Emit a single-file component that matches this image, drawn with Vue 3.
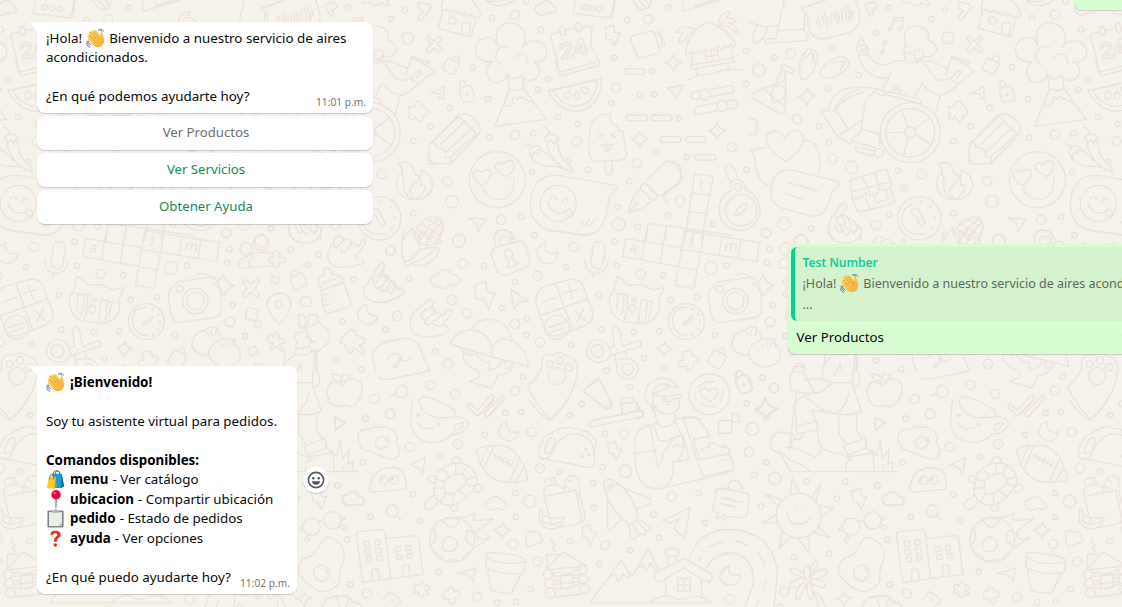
<script setup>
const dotsA = {
  8: [[74,31],[34,57],[336,54],[438,4],[482,89],[277,202],[209,323],[324,297],[152,379],[100,423],[327,413],[504,237],[474,270],[534,351],[593,372],[460,400],[456,516],[424,650],[623,509],[713,621],[826,456],[748,544],[865,647],[922,472],[703,174],[694,309],[741,60],[866,23],[779,283],[822,283],[897,354],[816,214],[1097,153],[1099,251],[1099,510],[999,673],[773,680],[100,640],[463,706]],
  14: [[405,44],[405,404],[202,543],[590,424],[708,263],[805,58],[770,490],[900,603],[1055,441],[363,659],[5,522]],
  19: [[216,605],[716,673],[237,722]]
}
const dotsB = {
  8: [[416,23],[379,98],[246,146],[74,174],[326,225],[236,265],[207,378],[236,428],[444,511],[462,563],[416,643],[184,685]],
  14: [[122,161],[141,357],[248,477],[49,699],[377,675]],
  19: [[27,210],[305,502],[102,671],[153,722]]
}
const dotsC = {
  8: [[86,145],[16,299],[166,365],[312,108],[405,156],[365,234],[442,265],[438,315],[428,440],[377,549],[423,546],[574,344],[558,112],[657,195],[703,35],[710,107],[850,136],[872,209],[951,201],[1041,107],[1168,57],[1162,98],[664,299],[761,307],[838,304],[793,384],[680,422],[751,471],[605,521],[570,556],[850,414],[1005,315],[1178,225],[1215,318],[1147,443],[1100,520],[463,16]],
  14: [[31,62],[248,101],[215,210],[262,250],[52,257],[204,401],[152,465],[225,492],[405,282],[480,337],[473,138],[581,51],[405,482],[782,132],[1158,10],[1170,276],[1182,474],[30,552]],
  19: [[237,32],[994,114]]
}
const dotsD = {
  8: [[107,56],[99,186],[23,257],[122,351],[52,419],[60,553],[249,282],[329,170],[271,363],[326,515],[464,104],[527,39],[573,36],[720,46],[756,12],[556,279],[557,351],[689,215],[818,202],[824,102],[789,249],[792,323],[719,423],[809,492],[602,567],[501,607],[557,606],[971,343],[987,413],[900,450],[1106,279],[1124,368]],
  14: [[181,41],[239,141],[384,132],[605,96],[630,205],[882,100],[549,432],[622,484],[825,436],[1025,290],[111,580],[441,590]],
  19: [[599,304],[886,214]]
}
const dotsE = {
  8: [[462,31],[538,58],[551,206],[121,83],[75,160],[132,336],[97,374],[117,469],[254,394],[370,395],[345,446],[466,407],[567,500],[496,569],[321,611],[215,622],[504,704],[173,770]],
  14: [[156,114],[578,147],[81,305],[187,724],[22,748]],
  19: [[91,237],[158,385]]
}
const dotsF = {
  8: [[812,25],[872,88],[956,103],[924,135],[1062,178],[1027,305],[736,348],[1156,329],[1009,421],[697,255]],
  14: [[1172,92],[690,305]],
  19: []
}
const groups = [
  ['translate(380 0) scale(.33333)', dotsA],
  ['translate(750 0) scale(.33333)', dotsB],
  ['translate(380 230) scale(.33333)', dotsC],
  ['translate(330 400) scale(.33333)', dotsD],
  ['translate(722 350) scale(.33333)', dotsE],
  ['translate(0 220) translate(540 0) scale(.33333)', dotsF]
]
const replies = [
  { text: 'Ver Productos', used: true },
  { text: 'Ver Servicios', used: false },
  { text: 'Obtener Ayuda', used: false }
]
</script>

<template>
  <main class="chat">
    <svg class="wallpaper" width="1122" height="607" viewBox="0 0 1122 607" aria-hidden="true">
      <defs>
        <g id="doodles">
          <g v-for="(g, i) in groups" :key="i" :transform="g[0]">
            <template v-for="(list, r) in g[1]" :key="r">
              <circle v-for="(c, j) in list" :key="j" :cx="c[0]" :cy="c[1]" :r="r" />
            </template>
          </g>

          <g transform="translate(380 0) scale(.33333)">
            <path d="M73 97L94 97L102 114L93 131L73 131L65 114Z" />
            <path d="M116 22Q108 10 121 6L137 12Q150 7 154 23L125 60Q116 63 113 53L130 32Q120 32 116 22Z" />
            <path d="M142 117Q137 110 145 107L163 124L180 107Q189 110 186 117L171 132L188 149Q186 158 178 157L163 143L147 158Q137 155 139 147L154 132Z" />
            <path d="M189 0Q184 10 184 24Q192 37 201 27Q209 42 219 31Q226 46 236 35Q244 51 254 39Q262 55 272 43Q280 59 289 47Q297 60 301 48Q304 29 275 0M187 30L176 85L273 112L287 58M243 103L246 76Q251 62 267 68Q274 72 271 84L265 110" /><circle cx="217" cy="62" r="11" />
            <path d="M318 1Q352 33 400 2M318 0Q350 10 374 0" />
            <path d="M353 137Q345 103 354 87Q370 65 393 69Q430 72 436 108Q437 126 428 142Q438 121 468 123Q502 128 500 160Q495 188 459 187Q480 194 479 216Q474 242 445 242Q430 239 424 226Q410 239 401 236Q388 233 381 220Q377 245 348 248Q318 243 320 211Q323 191 338 185Q289 188 286 151Q289 112 330 113Q347 120 353 137M387 141Q361 134 350 156Q341 181 365 194M402 174Q414 157 429 163Q445 170 443 192" />
            <path d="M381 220L389 267L344 379L499 358L432 267L428 232M389 267Q410 275 432 267M374 306Q374 320 392 318Q401 311 397 297Q402 286 409 296Q413 303 417 288Q422 294 428 293Q443 304 460 307" />
            <path d="M463 28Q465 15 479 16Q485 1 501 2Q516 5 516 15Q528 16 529 28Q527 42 512 39Q501 36 493 44Q477 49 473 39Q464 38 463 28Z" />
            <path d="M586 0L579 40L690 54L700 20L702 0M690 54Q700 53 700 43L705 0" /><circle cx="614" cy="22" r="8" /><circle cx="637" cy="25" r="8" /><circle cx="659" cy="28" r="8" />
            <path d="M538 96L519 101Q511 104 513 114L530 176L527 193L539 220Q541 228 549 226L653 198Q662 193 658 182L632 140L636 85Q633 77 622 79L607 83M556 92L585 85M530 176L535 209Q538 216 546 215L655 185" /><rect x="540" y="79" width="15" height="28" rx="8" transform="rotate(-12 548 93)" /><rect x="588" y="69" width="15" height="28" rx="8" transform="rotate(-12 595 83)" />
            <text class="date" x="544" y="179" font-size="66" transform="rotate(-12 544 179)">24</text>
            <path d="M505 272L664 235Q665 295 626 323Q585 345 548 322Q514 298 505 272ZM519 270L651 240Q653 284 617 311Q580 328 551 307Q529 294 519 270M566 273Q547 283 557 295Q571 301 573 285Q572 277 566 273M589 276Q577 288 587 298Q601 298 601 286Q598 278 589 276M603 264Q605 281 621 280Q632 269 617 262Q611 260 603 264" />
            <path d="M675 83L702 76L704 98L720 98L703 139L697 119L679 118Z" />
            <path d="M762 106L809 94Q821 92 825 103L839 148Q840 158 831 161L784 173Q772 173 768 162L752 122Q752 109 762 106ZM826 107L837 92L855 131Q857 138 848 140L834 136M837 94L847 131" />
            <path d="M759 0Q769 22 783 30L803 25Q812 21 812 0M776 0L798 25M796 0L807 18M907 0L909 34L1018 0M945 9Q948 18 953 14L1000 0" />
            <path d="M880 165Q887 183 904 188Q887 193 881 213Q873 194 856 188Q874 184 880 165Z" />
            <path d="M917 161Q919 112 963 77Q988 57 1009 78Q1045 91 1067 132Q1063 147 1052 133Q1045 151 1034 136Q1026 155 1015 140Q1007 159 996 143Q988 161 978 147Q968 167 957 150Q945 169 936 153Q929 165 917 161M934 158L938 192M1052 142L1059 174M932 195L1062 174L1064 185L935 207ZM947 207L952 224M1043 189L1046 207M975 151L980 185M1012 145L1017 178M993 150L997 183M977 170L1015 164M926 240Q940 236 951 224Q983 227 1010 218Q1040 203 1087 211" />
            <path d="M945 88Q907 70 885 97Q898 96 910 97Q894 112 899 128Q912 125 920 109Q930 98 945 94M1017 78Q1012 39 1050 35Q1046 46 1037 54Q1060 52 1070 66Q1058 69 1046 67Q1068 79 1077 97Q1064 97 1050 83Q1035 74 1017 78L1032 61" />
            <path d="M859 264Q877 263 908 255Q900 284 884 299L881 277Z" />
            <path d="M931 285Q933 278 942 276L960 273M990 268L1052 257Q1061 258 1062 269Q1062 276 1053 279L991 290M958 295L940 298Q931 295 931 285M942 329Q943 321 951 319L1012 309M1042 303L1064 300Q1075 306 1073 317Q1070 323 1064 324L1043 328M1010 333L950 343Q942 339 942 329" /><circle cx="975" cy="284" r="16" /><circle cx="1027" cy="317" r="17" />
            <rect x="733" y="206" width="61" height="17" rx="8" /><rect x="738" y="345" width="64" height="17" rx="8" /><rect x="814" y="345" width="62" height="17" rx="8" /><rect x="841" y="410" width="62" height="17" rx="8" /><rect x="917" y="410" width="62" height="17" rx="8" /><rect x="944" y="464" width="62" height="17" rx="8" />
            <path d="M775 393Q786 410 805 416Q789 421 783 442Q775 425 755 420Q773 415 775 393M1009 368Q1016 386 1038 391Q1020 397 1012 416Q1005 399 987 393Q1004 388 1009 368" />
            <path d="M152 280Q174 272 192 259L192 298L177 293L182 281ZM204 174L232 188Q240 193 236 200L221 221Q214 226 207 220L189 207Q185 202 190 197ZM218 178Q225 161 235 170Q240 175 235 186M241 265L266 256Q274 256 277 266L284 296Q282 302 275 304L255 307Q249 306 246 299L238 274ZM242 263Q236 246 246 240Q254 240 257 257" /><circle cx="261" cy="283" r="3" />
            <path d="M87 320L103 321Q107 302 119 304L143 331Q142 349 134 346Q126 348 128 358L119 366L104 350Q92 370 86 349Q96 341 87 338Z" />
            <path d="M145 492L149 434L235 344Q268 330 298 375Q303 391 297 402L213 490ZM149 434Q151 422 160 428Q169 432 169 443Q189 439 196 459L197 472Q210 469 214 473L213 490M145 475L162 491M163 420L237 349L290 402L211 472M181 434L256 361M199 456L279 381" />
            <path d="M106 599Q51 597 50 548Q51 527 65 521Q70 502 55 492Q87 474 102 512Q106 529 117 528Q128 527 124 510Q157 523 158 556Q153 595 106 599M106 599Q139 577 134 558Q132 550 121 558Q127 542 119 531Q111 549 93 560Q82 578 106 599Q75 593 71 560Q74 537 65 521" />
            <circle cx="352" cy="539" r="84" /><path d="M308 567Q326 600 360 598Q405 592 401 535M307 557Q277 541 279 520Q287 504 306 517Q316 504 332 512Q341 532 307 557M380 530Q345 514 344 498Q351 481 371 494Q379 476 398 484Q411 508 380 530" />
            <path d="M489 383Q500 379 508 399M493 416Q498 403 516 402Q532 405 538 419L528 416L522 433L513 419L504 428ZM501 427Q503 463 541 498Q560 513 578 517Q576 501 550 478Q533 454 532 422M434 432Q444 430 455 441M448 462Q446 444 461 439Q477 435 484 449L472 449L474 462L462 457L458 471ZM451 468Q462 490 501 500Q532 495 553 507M486 452Q506 463 522 482M556 482Q563 471 571 482L576 488Q562 493 556 482" />
            <path d="M693 344Q655 335 634 370Q626 389 629 466Q632 484 653 484L718 480Q740 478 740 462L728 392Q717 397 713 387Q717 375 703 375Q691 371 692 357Q686 350 693 344M656 400L671 405L657 412M706 400L692 405L706 412M663 435Q681 434 698 434M672 435L675 450Q681 458 688 449L690 435M680 436L681 446M677 486L676 515Q677 524 686 524Q696 523 697 515L697 484" />
            <path d="M541 527L709 557Q719 562 690 584L678 650Q661 703 617 707L508 691Q450 672 451 611Q457 526 525 526Q533 525 541 527Z" /><circle cx="535" cy="610" r="54" /><path d="M503 604Q511 640 542 640Q558 638 566 626M511 599Q519 580 529 598M547 604Q556 587 564 603M553 636L565 626Q581 635 578 646Q571 656 565 648ZM601 664L614 677L628 658M618 671L625 679L649 655" />
            <path d="M782 565Q781 557 790 551L798 551L828 581Q834 591 827 598Q822 603 816 600L792 576ZM799 549L798 541L853 488Q868 477 881 491L902 519Q907 531 899 543L854 586L829 585M873 485Q893 484 900 503L905 523Q912 540 888 557Q851 571 851 588Q851 600 865 610M784 567L763 583L745 631Q745 639 753 636L798 620L812 602M748 633L769 612" /><circle cx="770" cy="611" r="4" />
            <path d="M944 521L1000 530L963 720M944 521L914 720M935 578L992 586M926 634L982 641M917 687L971 695M804 670L1060 706M804 670L798 720M859 680L855 720" /><text x="955" y="568" font-size="45" transform="rotate(8 955 568)">t</text>
            <path d="M1054 548Q1036 525 1035 502Q1037 489 1052 493Q1071 516 1075 540M1056 571Q1043 549 1062 541Q1082 534 1093 551Q1098 558 1096 568M1056 571Q1013 592 1018 638Q1027 686 1077 692Q1126 690 1141 638Q1138 586 1096 568M1066 648Q1068 618 1100 609Q1104 634 1066 648" /><circle cx="1074" cy="561" r="11" /><circle cx="1083" cy="631" r="47" />
            <path d="M265 654Q290 654 317 659L294 694L290 672ZM109 687Q111 671 126 673Q127 654 144 659Q154 646 166 653Q185 647 184 663Q194 674 188 688L179 720M126 673L175 704M144 659L190 684M166 653L187 666M109 687L153 720M121 720L146 680L172 660M140 720L164 684L188 668M97 685Q77 703 71 720M97 685L121 716M343 720Q341 687 370 688Q395 690 396 720" />
          </g>

          <g transform="translate(750 0) scale(.33333)">
            <path d="M103 0L77 116M0 68Q50 90 88 72M166 35L162 88L173 103Q177 113 171 122L42 130M26 75Q6 93 9 120Q14 132 25 130Q30 119 40 116L53 81M44 128L53 116L77 116M162 88L81 92" />
            <path d="M154 24L228 0M154 24Q158 31 173 43L174 78Q187 126 232 114L285 101Q333 90 330 43L317 0M198 56L202 75M206 48L211 83M216 47L222 72M223 35L232 85M234 50L236 67M242 41L246 74M251 37L255 62M259 37L264 71M266 44L269 64M274 29L279 70M284 22L290 62M293 19L299 62M301 31L304 58M307 32L309 49" />
            <path d="M346 18Q344 10 362 8Q377 3 380 20Q380 32 363 29L370 40Q369 51 361 48ZM422 85L432 54L459 52L458 83M430 64L458 62M422 85Q412 82 414 90Q425 94 427 84M458 83Q445 80 443 88Q451 94 458 85M400 154L402 124L412 124L411 131L402 134M400 154Q390 151 389 159Q396 164 401 155" />
            <path d="M150 190Q155 160 174 149Q199 144 203 169L192 206Q180 235 161 239Q146 239 150 190M157 182L186 155Q198 166 188 186M186 155L190 178M219 202Q239 176 274 170Q302 175 295 197Q283 218 254 229Q218 243 211 221Q211 211 219 202M244 188Q265 184 289 184Q274 199 271 212" />
            <path d="M96 199Q98 190 106 194L128 207Q135 213 129 219Q123 222 117 218L92 206ZM96 207L87 229Q77 236 82 245Q95 253 102 239L105 225L107 215M83 250L62 258L10 278Q0 288 9 297L90 340Q104 345 106 330L107 225M83 250L83 257" /><circle cx="86" cy="278" r="22" /><path d="M38 262Q68 285 69 309Q87 299 106 320" />
            <path d="M173 265Q178 284 194 288Q177 295 171 317Q164 296 143 290Q165 285 173 265M0 355L17 360L23 370L18 402L0 404" />
            <path d="M106 484Q50 450 49 416Q52 392 76 394Q98 397 105 418Q111 392 139 392Q162 395 161 420Q155 454 106 484M50 443L0 450Q11 453 14 481Q21 548 64 561M163 422Q208 420 209 485Q213 508 202 523M119 509L267 545Q277 550 248 571L238 605Q222 650 187 649L91 623Q57 606 63 565Q71 509 119 509M116 548L201 573M107 580L161 598" />
            <path d="M326 163L320 148L329 112Q338 108 344 134L352 140Q361 157 349 165ZM329 140L342 133L355 147L330 150M332 156L345 155M327 164Q337 236 417 236M355 164Q372 192 400 196Q411 195 430 184L467 180M422 218L396 270L410 276M467 177L461 149Q471 132 463 111Q467 75 501 79Q545 86 533 119Q563 132 559 154Q550 176 517 169L499 191M471 187L543 183L587 203L592 205M467 158L483 160M467 141L482 138" /><circle cx="506" cy="164" r="15" />
            <path d="M514 179Q544 219 559 237Q576 246 601 234M516 251Q545 286 579 285Q602 276 621 255M516 251L494 293M587 228L604 173L650 196L672 215L624 252L603 239L611 224L625 213Q639 210 633 219L620 233M605 169L661 184L657 190L604 173M571 286L554 347" />
            <path d="M241 334Q218 326 213 336L257 401Q290 430 305 430M235 329Q246 280 288 266Q359 254 407 275L402 287Q389 287 377 275Q348 287 345 310L333 387M251 333Q279 276 332 269M256 329Q285 290 341 276M259 334L293 385M337 360L271 404M334 388L388 402L390 438M333 390L323 407Q303 407 306 424L379 444M317 440L373 452L372 468L324 456Q314 451 317 440M412 283L416 274L508 298Q516 301 511 311L412 285M424 274Q428 265 450 269L450 281M432 266Q435 258 444 260L445 268" /><circle cx="387" cy="459" r="14" /><circle cx="481" cy="398" r="90" /><circle cx="481" cy="398" r="73" /><circle cx="481" cy="397" r="16" />
            <path d="M475 382L455 334M494 386L539 353M496 403L541 434M475 412L461 467M465 397L408 398M301 547Q300 541 306 539L403 508Q409 507 412 515L425 550Q421 570 406 568Q393 575 388 565Q385 586 367 583Q352 591 346 577Q335 601 306 594L301 547M306 594L321 632Q326 637 335 635L424 612Q434 610 433 600L422 563M337 530L362 583M306 575L423 545M374 517L388 565M346 590L359 630M373 589L381 608L416 596L407 571" />
            <circle cx="508" cy="655" r="65" /><path d="M489 610Q446 628 459 674Q476 709 516 701Q522 703 528 701M483 633Q483 626 504 626L525 670Q520 683 510 676L499 648Q485 645 483 633M250 720Q230 695 241 659L270 618Q279 604 290 616Q292 625 271 646M258 654Q268 642 282 655L286 672Q285 678 276 676Q264 678 258 654M270 648Q280 640 294 653L303 675Q304 688 290 684M289 653Q304 653 314 665L322 684Q322 695 311 694M316 674Q332 680 334 697L330 720" /><circle cx="513" cy="606" r="2" /><circle cx="541" cy="622" r="2" /><circle cx="554" cy="653" r="2" /><circle cx="544" cy="686" r="2" />
            <path d="M456 5Q460 14 478 6Q487 21 498 12Q507 22 513 9Q525 18 538 13L531 0" />
          </g>

          <g transform="translate(380 230) scale(.33333)">
            <path d="M73 0Q57 53 72 93L81 94Q119 79 118 45Q105 19 97 0M72 93L74 104L84 111L91 101M90 94Q92 78 105 67Q128 48 179 55Q169 93 134 104Q110 109 91 101Q127 92 160 63M119 0L183 32Q175 45 148 47L119 41ZM142 0L120 30M166 0L137 43M186 0L163 43" />
            <path d="M348 46L342 24Q348 0 366 0Q398 0 406 31M363 47L358 29Q366 10 388 23L393 36M354 50L418 33Q431 35 436 45L449 90Q451 102 439 112L384 134Q367 141 355 128L334 79Q333 57 354 50M374 74Q370 62 384 59Q398 60 398 72Q399 80 393 83L415 101L384 114L386 86Q377 83 374 74" />
            <path d="M497 37Q473 46 471 70Q478 101 508 100Q535 93 534 66Q522 75 507 69Q491 59 497 37M648 36L664 36Q679 42 676 62L667 107Q659 121 642 113Q632 109 633 91L640 50Q642 39 648 36M615 87Q613 129 649 130Q675 130 683 99M641 132L638 144M505 0L590 12Q625 20 656 0" />
            <path d="M738 26L906 53M738 26L728 80L948 119M792 36L785 90M849 45L841 99M801 0L792 36M857 0L849 45M915 0L886 166L942 176L973 0M914 2L1139 38L1130 94L902 58M1027 20L1017 75M1083 28L1075 83" />
            <text x="746" y="65" font-size="42" transform="rotate(8 746 65)">a</text><text x="930" y="39" font-size="42" transform="rotate(8 930 39)">j</text><text x="1031" y="61" font-size="44" transform="rotate(8 1031 61)">m</text>
            <path d="M0 95Q14 93 13 110L8 133Q25 132 30 149L47 157L44 176L69 177Q77 183 68 192L25 213Q11 218 0 216M0 140Q15 131 25 141L8 167Q2 176 10 184Q18 189 23 182L44 157M19 185Q15 190 0 180" />
            <path d="M152 153Q154 136 169 138Q177 119 194 119Q210 120 214 134Q233 132 239 150Q236 169 217 163Q207 161 202 171Q183 180 176 169Q158 175 152 153M283 166L317 154L321 187L346 190L325 241L312 208L289 207ZM392 178L446 213L417 216L402 239Z" />
            <path d="M102 248L148 208Q159 203 164 215L153 235Q164 234 168 249Q183 247 184 259L205 240Q217 240 216 250L187 285Q206 287 206 300Q196 316 164 319Q124 326 102 310Q79 285 102 248M150 235Q132 236 122 254Q123 262 131 267M153 235Q166 236 162 249L136 270Q131 280 141 284Q153 286 160 273L184 257M157 280Q170 293 187 285" />
            <path d="M492 170L572 148Q597 144 610 168L639 248Q642 272 616 286L536 316Q509 323 496 300L468 220Q464 184 492 170M528 162L579 303M484 256L623 207M487 217L529 202M551 189L593 179M565 164L578 206M585 241L616 272M611 235L590 278M503 294L553 277M509 308L553 293" /><circle cx="530" cy="292" r="36" />
            <path d="M0 335L68 325Q119 324 125 370L150 423L39 445Q0 452 0 440M22 387Q36 364 55 372Q67 378 56 394L40 408Q41 417 52 409Q63 397 63 383Q71 402 92 386" />
            <path d="M273 300Q284 268 332 268Q384 272 397 329M210 342Q231 295 285 300Q340 314 337 382ZM341 346Q353 325 380 328Q437 339 445 410L338 381M240 353Q257 365 247 384Q259 409 294 422Q306 437 295 443L269 454L332 474Q344 465 351 437Q391 433 404 402M250 361L259 372L279 377L275 365M287 368Q295 391 328 399L326 422Q360 416 368 391M328 380L348 385M374 393L379 416Q391 416 397 398" />
            <path d="M711 138Q736 153 742 165L784 163Q800 170 820 180L850 173Q848 192 836 207L839 234Q831 270 799 278Q752 283 714 267Q691 251 688 216Q688 199 699 187Q705 168 711 138M709 191L749 195M784 207L819 217M714 195L711 239M732 195Q729 205 733 211Q726 220 731 231L723 254M745 195Q740 206 743 216Q737 225 742 238L734 268M784 207L775 276M804 216Q796 223 802 232Q795 240 800 248L794 275M817 217L806 262M754 209Q763 203 771 207L764 217ZM747 229Q747 247 758 248Q768 244 767 230Q757 215 747 229M751 232Q758 224 762 231" />
            <path d="M996 175Q1004 157 1022 154L1107 142Q1122 140 1132 154L1144 182L1144 247Q1137 263 1115 264L1020 278Q1000 276 993 255L985 201Q984 184 996 175M1069 136Q1089 123 1108 138L1107 142M1150 132Q1156 160 1182 166Q1162 173 1151 198L1141 184Q1133 164 1115 161Q1137 162 1150 132" /><circle cx="1019" cy="176" r="10" /><circle cx="1066" cy="213" r="38" /><circle cx="1066" cy="213" r="26" />
            <circle cx="919" cy="275" r="54" /><path d="M918 232Q872 232 878 282Q891 320 920 316M911 280L937 257Q940 268 917 284Q908 288 911 280" /><circle cx="938" cy="238" r="2" /><circle cx="954" cy="254" r="2" /><circle cx="960" cy="275" r="2" /><circle cx="954" cy="297" r="2" /><circle cx="939" cy="313" r="2" />
            <circle cx="652" cy="363" r="19" /><circle cx="743" cy="418" r="17" /><path d="M697 301Q700 287 710 290L718 300L728 350L774 332Q786 333 781 349L690 377Q684 398 651 397Q615 388 620 356Q631 328 655 329Q674 330 688 353L704 350L697 301M736 365L741 386Q774 392 776 418Q768 447 742 447Q708 443 711 409L704 374M712 388L737 386M688 353L693 373" /><circle cx="714" cy="360" r="1" />
            <path d="M856 335Q859 353 878 356Q860 361 850 379Q848 361 830 353Q848 351 856 335M908 376Q903 368 910 365L927 362Q935 361 937 379Q956 377 954 392L950 397Q939 394 941 408Q933 425 921 421L918 406Q900 414 896 405Q887 390 910 391ZM1003 359L1033 374Q1041 379 1038 384L1024 411Q1018 417 1013 416L989 402Q981 397 984 391ZM1016 365Q1019 352 1030 353Q1037 356 1034 374M1068 445L1091 435Q1102 432 1108 441L1118 474Q1115 483 1108 486L1087 492Q1081 491 1078 485L1066 454ZM1071 442Q1066 430 1075 421Q1088 422 1089 436" /><circle cx="1092" cy="464" r="3" />
            <path d="M1055 345Q1058 306 1097 300Q1110 290 1112 288L1118 295L1125 290L1132 293L1130 303L1141 311L1141 321M1055 345Q1061 373 1104 376M1150 324L1160 331L1167 324L1174 330L1186 327L1181 338Q1203 350 1201 384Q1184 413 1145 411Q1111 398 1105 368Q1108 345 1137 333L1150 324M1098 307L1107 315M1112 301L1116 317M1127 301L1127 317M1145 343L1149 351M1159 339L1161 352M1171 339L1171 352M1182 343L1187 350" />
            <path d="M511 570Q469 524 443 470Q472 446 485 411Q482 378 506 373L519 376Q537 361 558 377Q594 382 592 422Q586 501 511 570" /><circle cx="509" cy="402" r="10" /><circle cx="540" cy="391" r="11" /><circle cx="567" cy="412" r="11" /><circle cx="531" cy="438" r="26" />
            <circle cx="66" cy="485" r="18" /><path d="M49 490L30 497M265 524Q272 519 278 528L293 541L333 494Q342 492 344 501L300 553Q292 559 287 554L267 535Q262 530 265 524M314 549L367 497Q376 499 372 506L323 560Q312 561 314 549" />
            <path d="M610 483L654 442L690 509L691 525L673 532Q654 520 610 483M619 475L653 451M673 532L684 539L696 526L689 515M723 520Q721 508 726 498Q729 506 735 502L756 503Q763 509 761 514L773 519L779 544M723 520L768 516L772 541M723 520L725 555M640 570L779 543Q792 543 790 554Q786 563 770 568" />
            <circle cx="988" cy="493" r="61" /><path d="M955 471Q978 448 1005 457M960 518Q979 535 1005 528M945 492L948 509M1029 482Q1028 503 1020 512M988 516Q955 494 962 478Q975 466 987 485Q998 466 1013 480Q1021 495 988 516M798 515Q787 466 827 449Q869 434 895 473L879 472L860 462Q828 459 818 487Q814 514 830 570M820 489L855 478L859 462L864 477M824 494L848 499L855 514Q870 520 879 508L899 505L903 492L850 500M844 508Q850 517 857 507M886 503Q890 510 898 503M816 516Q814 531 829 523M827 530Q842 559 875 550Q900 548 898 511M860 522L873 526M882 553L888 570M897 566Q930 553 963 570" />
            <path d="M1158 502Q1163 535 1195 534Q1163 545 1154 573Q1149 549 1122 541Q1152 536 1158 502" />
          </g>

          <g transform="translate(330 400) scale(.33333)">
            <path d="M268 7Q275 45 327 54L371 51Q380 44 373 31Q323 -4 282 -10Q266 -7 268 7M248 0Q239 54 243 80Q258 129 316 127Q350 123 365 102Q399 105 416 73Q413 51 375 49M374 74L400 67Q397 85 379 92L372 91ZM265 68Q275 94 312 83" /><circle cx="265" cy="45" r="4" class="solid" /><circle cx="326" cy="73" r="4" class="solid" />
            <path d="M418 13Q413 21 420 28L438 44Q446 49 452 42L493 0M466 42Q466 51 476 50L520 0M599 0Q626 43 656 62Q690 39 711 0M792 0L829 28L847 17L842 0M776 72Q775 63 785 62L927 31Q942 31 940 42Q942 50 928 52L787 80Q778 80 776 72M874 12L917 6L928 20L929 31M874 12L878 40" />
            <path d="M532 63Q505 75 505 98Q517 125 544 122Q566 116 565 94Q553 101 538 93Q526 81 532 63M241 193L286 174L277 223L265 203ZM14 52L46 68L17 91Z" />
            <path d="M84 108Q87 86 114 88Q153 73 184 87Q209 103 199 127Q219 152 201 171Q190 181 172 175L103 149Q80 135 84 108M170 114Q153 103 140 117Q128 134 146 145Q168 150 174 129M175 110L176 124L163 118" />
            <path d="M119 264Q124 219 162 205Q211 195 224 225L230 259Q231 268 218 269L129 276Q119 276 119 264" /><circle cx="161" cy="241" r="13" /><circle cx="192" cy="240" r="13" /><circle cx="155" cy="237" r="4" class="solid" /><circle cx="187" cy="236" r="4" class="solid" />
            <path d="M317 246Q313 212 360 192Q401 182 423 204Q448 226 437 258Q405 307 372 315Q333 321 316 289Q308 271 317 246M344 250Q346 231 381 221Q401 219 411 239Q410 256 375 278Q351 288 345 276Q341 260 344 250M340 207L359 232M377 191L377 219M411 200L397 222M438 230L410 238M438 259L407 252M409 289L388 273M370 315L371 281M332 304L347 280M310 265L341 263M318 237L345 246M367 186Q365 171 380 169Q393 170 392 186M314 228Q293 226 296 240Q300 250 314 248M440 253Q458 251 459 265Q456 278 432 275M313 285Q293 298 284 308Q280 327 297 330Q312 330 322 306M361 320Q363 335 376 334Q388 327 384 308" />
            <path d="M440 152Q451 132 526 137Q576 159 593 235Q588 250 528 246Q478 244 451 192ZM476 138L454 185M490 141L464 202M567 180L538 245M580 203L556 247M491 166L546 197M499 161L493 176M512 167L506 182M523 174L518 188M537 179L529 195M549 187L541 201" />
            <path d="M629 173Q619 159 633 131Q647 99 667 102Q672 88 686 91Q693 79 705 84Q717 76 730 86Q746 82 757 93Q776 89 779 103Q802 113 797 136L795 145M629 173Q640 182 653 173Q667 165 669 153Q695 99 738 102Q800 108 793 188Q794 202 775 202L629 173M646 142Q654 119 662 113Q676 112 676 121Q678 130 670 137L662 157Q647 163 644 158Z" /><circle cx="767" cy="149" r="3" class="solid" /><circle cx="776" cy="165" r="3" class="solid" /><circle cx="758" cy="169" r="3" class="solid" />
            <path d="M833 131L856 124L861 146L876 148L858 184L849 160L836 158ZM755 382L777 375L784 395L800 397L781 436L773 414L759 411Z" />
            <path d="M645 249Q641 239 652 236L672 232L680 253L650 258M650 258Q639 269 642 287L662 367M642 290L737 270L755 352Q756 368 744 371L689 382M672 254Q694 253 702 270M701 268Q701 243 715 231Q738 221 746 238L746 262M705 259L719 266M714 240L725 244M746 270L765 345Q764 364 752 370M661 236L668 251M628 330L636 328L640 346Q674 359 703 351Q698 379 677 385Q644 392 628 365ZM638 350L637 362Q665 383 694 363" />
            <path d="M820 252Q823 236 845 239Q907 272 925 354L899 374Q840 338 820 252M831 272Q851 248 867 258M829 260L849 251M876 262L952 292Q967 299 962 309L950 317L921 326M832 295L833 387L839 392L871 360M897 376L901 407L912 419L927 402L945 405L949 393L961 385L933 360M909 373L927 402M922 363L949 393" />
            <path d="M914 132Q912 96 943 80L985 68M914 132Q912 220 938 252Q962 272 1000 264Q1034 247 1029 187M915 161L973 151M961 80L984 203Q999 182 999 156L1013 143L1028 121L1019 116L1018 125L986 121L972 76M985 68Q990 84 1010 79Q1031 77 1034 55L1093 53Q1126 69 1138 108L1089 119M1035 63L1056 109L1061 135Q1061 163 1041 183L1029 186M1061 57L1118 230M1020 115L1059 105L1077 178L1043 186M1028 145Q1027 138 1041 135L1057 140M1091 117L1108 178L1200 161M1118 230L1200 213M1006 262L1190 221M1112 155Q1112 145 1137 142Q1136 123 1149 130L1171 139Q1197 137 1197 152L1198 169M950 0L974 40L982 73M966 14L968 24L978 22" />
            <path d="M998 361Q1046 341 1081 322L1063 417L1031 385L1051 353L1021 370ZM1165 62L1200 62M1165 62L1166 101L1200 99M1198 270Q1153 259 1157 280L1149 326Q1148 335 1166 340Q1160 352 1157 355L1186 346M1173 292L1200 296M1170 310L1200 318" />
            <path d="M466 311Q468 298 480 299Q486 288 501 290Q511 294 513 302Q529 304 529 317Q526 333 512 327Q498 321 489 330Q467 332 466 311M37 297Q39 284 50 285Q59 271 75 277L84 288Q101 287 103 303Q100 316 91 315Q80 310 64 317Q44 319 37 297" /><circle cx="187" cy="333" r="18" /><path d="M200 347L214 361" />
            <path d="M80 407Q78 397 88 395L155 388Q165 389 166 401L182 535M80 407L98 547L279 523L265 414Q262 407 254 407L169 416M125 543L125 511Q129 505 144 507L148 540M219 530L217 500Q219 494 236 495L240 526M102 424L118 424L119 439L104 441ZM134 421L149 420L151 434L136 436ZM105 450L120 447L122 462L107 464ZM137 446L151 443L153 458L138 460ZM109 473L123 470L125 485L110 487ZM140 469L154 466L156 480L141 482ZM197 442L211 439L212 453L198 456ZM227 438L241 436L242 450L228 452ZM200 466L214 464L216 477L202 479ZM231 462L245 459L247 473L233 475Z" />
            <circle cx="367" cy="419" r="67" /><path d="M340 364L340 357Q363 347 383 359L387 365L371 382L358 383ZM337 427L357 409L379 420L383 435L371 454L347 454L337 443ZM305 390L315 390L316 421L304 433M433 397L415 391L409 407L409 424L425 435M312 457L336 468L340 480M350 485Q370 475 386 482M397 477L405 462L416 457M374 352Q411 353 435 339L428 359Q445 364 490 356L442 393Q434 411 451 417Q457 420 480 411Q454 434 432 443" />
            <path d="M519 366Q521 386 542 390Q520 396 517 417Q511 396 490 390Q512 386 519 366M588 401Q582 394 598 392L604 397L617 393L628 398L634 411Q643 424 631 428L602 439L593 437Q584 417 588 408Z" />
            <path d="M471 459Q486 454 526 462Q574 464 588 483L582 517Q569 524 519 519Q466 510 466 493ZM471 470Q490 490 548 491L585 486M473 507L482 568Q496 580 544 580L574 521" />
            <path d="M664 415L666 426Q678 434 668 444L677 455M652 464L652 506L698 456L770 497L754 500L652 509M652 464L685 463M691 526L726 519L730 561L694 567ZM664 520L691 517M729 512L750 509M673 542L691 541M731 534L749 533M674 564L693 567M731 557L748 552M675 591L754 582M667 529L750 524M670 554L748 545" /><circle cx="654" cy="522" r="14" /><circle cx="657" cy="550" r="14" /><circle cx="661" cy="579" r="15" /><circle cx="756" cy="508" r="14" /><circle cx="760" cy="537" r="14" /><circle cx="764" cy="567" r="14" />
            <path d="M780 608L872 482L907 530L954 447L987 511M838 530L856 521L864 546L879 523L895 535L901 517M921 508L939 495L948 516L960 489L977 510M780 608L1148 608M964 604Q994 585 1018 588Q1049 608 1088 588Q1117 585 1145 608M973 534Q969 524 975 519L1062 475L1143 521Q1150 532 1142 540Q1130 548 1109 534L1062 504L994 543Q978 545 973 534M1008 538L1007 587M1114 540L1115 590M1043 536L1080 535L1081 572L1043 573ZM1043 555L1080 554M1062 536L1062 572M1012 465Q1005 468 1003 455Q1006 445 1017 445L1042 446Q1050 453 1045 465L1040 468L1012 469ZM1012 469L1014 495M1040 468L1041 483M1077 477Q1100 409 1160 393Q1175 389 1200 389M1106 484Q1108 475 1112 471M1137 443Q1158 428 1178 427M1129 505Q1140 480 1159 472Q1176 462 1200 463M1138 549L1147 530M1200 497Q1171 505 1169 531Q1179 552 1200 556M382 520Q414 514 437 503L430 544L412 523ZM344 573L355 572Q352 561 363 562Q372 564 373 576Q388 570 388 581Q392 592 376 592Q381 606 370 611Q359 616 358 597Q343 602 341 591Q338 578 344 573M254 563Q247 556 260 552L269 558L272 544Q281 541 284 558L293 555Q301 558 297 568L285 571L296 579Q296 592 281 582Q276 595 267 588L266 574L254 580Q248 573 256 568ZM158 601L178 574L207 594L212 606L195 619M0 595Q36 581 57 592L70 604Q92 608 96 621" /><circle cx="186" cy="601" r="3" />
          </g>

          <g transform="translate(722 350) scale(.33333)">
            <path d="M208 119Q200 91 207 75L213 66L244 64L276 129Q234 132 208 119M211 62Q214 50 230 48L247 54L243 66M217 51Q220 38 233 38L246 46L248 55M311 0Q306 50 299 88M299 88Q276 83 246 91M299 88L332 98L391 97L400 0M332 98L297 126L276 129M357 40L337 78M404 0L406 65Q419 79 408 106L397 112M390 100L419 184Q382 200 337 190Q370 177 382 130M337 190L317 191L244 136L276 128M244 139Q218 151 217 167L224 229M271 182L331 183M269 180L285 219M223 229L283 214L289 239L228 251L221 234M217 167L202 302M224 130L220 153M349 191L352 253L370 280M404 196L404 239L420 264M366 288L429 264L435 292L377 315ZM435 292L446 310M377 315L383 330M285 241L296 293Q294 312 281 321L208 291L209 269L230 270L242 254M190 292L211 291M145 291Q142 257 174 246L212 252L220 265L230 270M145 291Q155 308 175 312L206 364M156 301Q188 306 197 325L238 344L263 361M297 292Q320 309 349 309L391 330Q373 333 372 344L370 362M206 364L525 365M383 320L454 309L456 362M445 308L449 300L463 318L475 271L481 326L502 298L498 344L512 334L511 359M482 350L483 360" />
            <path d="M435 125Q440 84 473 102Q507 76 533 94Q550 124 528 153Q511 180 486 165Q454 176 442 153Q435 140 435 125M478 105L473 91M475 95Q454 93 448 73Q472 68 480 90L483 69Q492 74 505 78Q497 92 482 108M461 203L490 217L459 240L460 222ZM41 82L62 75Q75 77 80 89L92 117L64 132Q53 128 49 118ZM43 80Q36 68 47 61Q59 61 61 75" /><circle cx="66" cy="103" r="3" />
            <path d="M128 143Q134 171 169 177Q141 184 139 213Q132 187 98 179Q121 170 128 143M30 190L50 192L52 216L31 215ZM0 211L30 211M28 216L29 251L0 250M0 292L20 293L36 361L0 368M0 331L24 329M0 413L73 430Q83 434 82 444L75 493Q72 503 60 503L15 500L0 512M20 416Q14 396 37 390Q61 397 61 422L59 427M0 444L61 457M0 461L41 470" />
            <circle cx="230" cy="497" r="67" /><path d="M197 485Q198 524 232 522Q262 519 266 496M205 433L210 384L231 425M273 435L296 402L282 454M294 466L335 476L299 498M288 529L325 563L273 546M261 561L261 609L229 566M204 562L171 596L182 544M161 518L120 518L163 495M168 467L130 433L183 450" /><circle cx="224" cy="479" r="1" /><circle cx="243" cy="482" r="1" />
            <path d="M388 424L417 415L418 438L434 440L417 478L407 458L394 455ZM480 447Q482 434 494 435Q510 417 527 431L531 440Q544 441 547 453Q543 468 531 465Q509 463 492 466Q480 462 480 447" /><circle cx="388" cy="530" r="26" /><circle cx="452" cy="511" r="26" /><path d="M411 518Q414 509 426 515M361 531Q350 533 350 540L365 541M377 555L367 572Q374 582 382 569L384 555M472 501Q486 497 490 505L479 511M471 528L486 539Q497 537 495 530L478 525" />
            <path d="M423 568Q441 552 471 579Q493 600 484 634Q468 663 474 693Q454 729 412 723Q386 713 368 691Q343 673 352 643Q361 623 388 618Q407 602 423 568" /><circle cx="419" cy="669" r="24" /><circle cx="429" cy="681" r="1" /><path d="M429 657Q436 663 435 671M370 724Q366 740 390 744Q369 749 367 771M367 771Q362 749 341 746Q366 741 370 724M256 688Q224 676 208 668Q198 652 218 656Q235 656 250 680M250 680Q235 650 260 648Q265 662 262 680Q263 646 281 632Q290 639 284 651Q267 670 262 686Q286 656 305 657Q318 661 316 671Q299 686 263 689Q298 685 310 704Q308 718 291 709Q272 706 263 693Q279 727 272 742Q262 755 258 735Q253 718 259 694Q245 717 233 743Q223 753 221 740Q223 716 248 694Q227 717 204 714Q201 700 218 692ZM269 724Q286 736 288 771M278 725Q304 742 310 771M0 540Q73 531 128 576Q165 622 166 675L156 771M0 609Q52 601 79 636Q99 665 93 703L69 771M40 573Q57 576 76 586M108 608Q121 624 127 647M133 687L124 721M110 752L103 771M20 645Q3 657 0 672M20 645Q16 667 31 675Q43 680 55 673Q54 696 35 705Q15 709 0 697M420 771Q427 744 452 740L464 738Q500 731 512 757Q537 758 539 771M464 738L471 771M500 745L493 771" />
          </g>

          <g transform="translate(540 220) scale(.33333)">
            <circle cx="738" cy="86" r="18" /><circle cx="783" cy="69" r="23" /><path d="M719 145Q710 119 731 115Q758 97 790 97L817 102M719 145L818 138M749 142Q744 116 760 108M817 97Q833 87 839 103L839 113Q858 109 857 123L847 129L838 125Q842 141 831 143Q820 144 819 125Q804 132 807 118Q809 108 821 113ZM730 188Q726 181 738 178L753 194L768 178Q779 178 777 189L762 205L779 221Q775 232 767 230L753 217L737 231Q727 229 728 221L743 205ZM741 262L774 269L770 302L736 297ZM767 302L785 306L779 325L762 319ZM817 168L837 173L833 191L815 186ZM743 387L765 378L776 396L752 409ZM905 232L926 229L936 244L926 259L907 257L901 243Z" />
            <path d="M837 219Q800 225 801 258Q810 289 838 311Q870 283 874 250Q869 221 837 219" /><circle cx="837" cy="253" r="11" />
            <path d="M865 14L868 43Q887 75 933 68Q967 56 964 20M886 17L897 39L907 34L902 18M909 32L920 47L928 38M929 28L942 42L951 31M872 176L900 159Q908 157 912 164L921 191L892 211Q883 210 880 204L872 182ZM875 175Q869 154 880 151Q892 150 896 162" />
            <path d="M1000 64Q1011 43 1027 52L1032 61L1009 84Q998 80 1003 65M1032 61Q1048 51 1056 69L1034 97Q1022 99 1023 88M1052 73Q1063 66 1075 79L1089 59Q1100 56 1095 74L1064 112Q1092 115 1091 129Q1081 137 1025 142Q990 142 983 112Q983 84 1001 69M957 190L955 178Q963 163 975 164L968 151Q977 139 989 147Q998 153 995 163Q1023 163 1030 176L1032 188L964 211ZM964 211L966 237L973 269Q979 280 989 279L1042 262Q1053 257 1052 246L1032 188M968 209L1028 188M966 191L1023 170M968 225L984 222M970 241L979 238M975 255L991 251" />
            <path d="M1099 254Q1071 262 1072 286Q1078 313 1106 314Q1132 309 1132 286Q1117 292 1104 279ZM1105 186Q1116 165 1143 130Q1156 123 1152 142L1135 166Q1115 168 1118 184Q1128 194 1133 181L1149 164L1160 180L1140 204L1130 204Q1122 202 1122 192M1152 169Q1166 169 1171 183L1158 207L1148 215L1141 208M1170 185Q1184 184 1187 197L1180 215L1171 220L1165 213M1187 198Q1199 201 1199 210M1105 186Q1082 207 1095 230Q1116 250 1160 247Q1182 238 1200 229" />
            <path d="M804 351Q803 341 813 343L821 352L825 342Q835 333 839 350L834 359L851 356Q863 366 848 372L837 373L850 390Q843 399 827 377Q820 397 810 389L820 370L803 366Q795 357 808 355ZM900 323L894 288Q905 279 917 293L918 320Q932 300 925 289Q940 279 952 289L955 301Q936 324 902 323M886 341Q898 335 908 338M890 341Q877 360 892 367Q880 384 899 387Q914 386 928 377L928 366L949 364M954 305Q964 309 967 319Q988 325 991 352Q984 376 957 391Q940 398 929 382M887 387L886 403L922 404L939 391M886 403Q860 420 848 440M939 393Q955 414 947 450M912 317L924 347L936 361L915 349M898 429L904 449M1049 329Q1039 341 1024 355L1021 369L1033 373L1046 397Q1059 402 1062 384L1075 394L1091 404Q1101 404 1093 393L1077 376Q1099 370 1095 359L1069 345L1066 333ZM1200 360Q1128 364 1118 401Q1115 420 1128 450" />
          </g>
        </g>
      </defs>
      <use href="#doodles" x="-540" /><use href="#doodles" /><use href="#doodles" x="540" />
    </svg>

    <svg class="sprites" width="0" height="0" aria-hidden="true">
      <defs>
        <linearGradient id="hand" x1="0" y1="0" x2="1" y2="1"><stop offset="0" stop-color="#ffd95a" /><stop offset="1" stop-color="#f5ab3d" /></linearGradient>
        <symbol id="wave" viewBox="0 0 20 20">
          <path d="M2.4 11.2L1.6 6.9Q2.4 5.4 3.5 6.4L2.9 3.2Q4 1.7 5.2 3.4L5.6 1.8Q7 .7 8 2.4L9 1.2Q10.6 .6 11.4 2.2L15.4 7.8L15 4.3Q16 2.6 17.4 4.2L19.2 11.3Q19.5 16.8 14.8 18.8Q10.6 20.2 7.8 17.4Z" fill="url(#hand)" />
          <path d="M3.4 6.4L8.6 12M5.2 3.4L10.7 10.1M8 2.4L12.8 9M15.3 8Q12.8 10 13.4 13" fill="none" stroke="#d58b2d" stroke-width=".7" />
          <path d="M12.6 .8Q15.2 .8 16.8 2.8M14.2 -.1Q17.4 .1 19 2.6M.8 12.6Q1.4 16 4.2 17.6M.2 15Q1 18.4 4.2 19.5M2 12Q2.9 15.5 5.6 17" fill="none" stroke="#566b91" stroke-width=".9" />
        </symbol>
        <symbol id="bags" viewBox="0 0 20 20">
          <path d="M8 5V3Q8 1 10 1H12Q14 1 14 3V5M10 4V2.8Q10 1 12 1Q15 1 15 5" fill="none" stroke="#267da0" stroke-width="1" />
          <path d="M6 4H16.5L19 17L16 19H9Z" fill="#1b9ed7" /><path d="M16.5 4L19 17L16 19Z" fill="#086b9a" />
          <path d="M3 7H10L11 17L8.8 19.5H1Z" fill="#ffc928" /><path d="M10 7L11 17L8.8 19.5Z" fill="#d78c17" /><path d="M4 10V7Q4 5 6 5Q8 5 8 7V10" fill="none" stroke="#8b6c22" />
        </symbol>
        <symbol id="pin" viewBox="0 0 20 20"><path d="M9.8 8H11.5L11.2 18L10.5 20L9.8 18Z" fill="#8496a5" /><circle cx="10.6" cy="5" r="5" fill="#dc0c40" /><ellipse cx="9" cy="3" rx="1.5" ry="1" fill="#ff668c" /></symbol>
        <symbol id="clip" viewBox="0 0 20 20"><rect x="1.5" y="1.5" width="17" height="18" rx="1" fill="#7e8585" /><path d="M3.2 3.2H16.8V18H3.2Z" fill="#eeefe3" /><path d="M13 18L16.8 14V18Z" fill="#b8bdb4" /><path d="M6 4V2H8Q8 0 10 0Q12 0 12 2H14V4Z" fill="#acb3b5" /></symbol>
        <symbol id="question" viewBox="0 0 20 20"><path d="M4.6 6Q4.6 1.8 9.8 1.8Q15.4 1.8 15.4 6Q15.4 8 13 9.6Q11.4 11 11.4 13.5H8.2Q8 10.2 10.2 8.5Q11.9 7.1 11.8 5.9Q11.6 4.6 9.8 4.6Q7.9 4.6 7.8 6Z" fill="#ef2b1d" /><circle cx="9.8" cy="16.8" r="1.9" fill="#ef2b1d" /></symbol>
      </defs>
    </svg>

    <section class="messages">
      <div class="previous"></div>
      <article class="incoming">
        <div class="bubble tail greeting">
          <p>¡Hola!<svg class="emoji inline"><use href="#wave" /></svg>Bienvenido a nuestro servicio de aires</p>
          <p>acondicionados.</p>
          <p></p>
          <p>¿En qué podemos ayudarte hoy?</p>
          <time>11:01 p.m.</time>
        </div>
        <button v-for="r in replies" :key="r.text" :class="{ used: r.used }">{{ r.text }}</button>
      </article>

      <article class="outgoing">
        <div class="quote">
          <strong>Test Number</strong>
          <p>¡Hola!<svg class="emoji inline"><use href="#wave" /></svg>Bienvenido a nuestro servicio de aires acondicionados.</p>
          <p>...</p>
        </div>
        <div class="answer">Ver Productos<time>11:02 p.m.</time></div>
      </article>

      <div class="last-row">
        <article class="bubble tail welcome">
          <p><svg class="emoji"><use href="#wave" /></svg><b>¡Bienvenido!</b></p>
          <p></p>
          <p>Soy tu asistente virtual para pedidos.</p>
          <p></p>
          <p><b>Comandos disponibles:</b></p>
          <p><svg class="emoji"><use href="#bags" /></svg><b>menu</b>- Ver catálogo</p>
          <p><svg class="emoji"><use href="#pin" /></svg><b>ubicacion</b>- Compartir ubicación</p>
          <p><svg class="emoji"><use href="#clip" /></svg><b>pedido</b>- Estado de pedidos</p>
          <p><svg class="emoji"><use href="#question" /></svg><b>ayuda</b>- Ver opciones</p>
          <p></p>
          <p>¿En qué puedo ayudarte hoy?</p>
          <time>11:02 p.m.</time>
        </article>
        <button class="react" aria-label="Reaccionar">
          <svg viewBox="0 0 20 20" width="20" height="20"><circle cx="10" cy="10" r="7.6" fill="none" stroke="#54585a" stroke-width="1.6" /><circle cx="7.3" cy="8.3" r="1.25" fill="#54585a" /><circle cx="12.7" cy="8.3" r="1.25" fill="#54585a" /><path d="M5.7 11.3H14.3Q13.2 14.8 10 14.8Q6.8 14.8 5.7 11.3Z" fill="#54585a" /></svg>
        </button>
      </div>
    </section>
  </main>
</template>

<style>
body { background: #f5f1eb; }
</style>

<style scoped>
.chat { position: relative; width: 1122px; height: 607px; overflow: hidden; background: #f5f1eb; font-family: "Noto Sans", "Open Sans", sans-serif; font-size: 13.37px; line-height: 19.5px; color: #0a0a0a; }
.wallpaper { position: absolute; inset: 0; fill: none; stroke: #ede3db; stroke-width: 4; stroke-linecap: round; stroke-linejoin: round; }
.wallpaper text { font-family: "Noto Sans", sans-serif; fill: #ede3db; stroke: none; }
.wallpaper .date { font-family: Inter, sans-serif; font-weight: 700; fill: none; stroke: #ede3db; stroke-width: 3.5; }
.wallpaper .solid { fill: #ede3db; }
.sprites { position: absolute; }
.messages { position: relative; display: flex; flex-direction: column; align-items: flex-start; }
.previous { align-self: flex-end; width: 48px; height: 10px; background: #d9fdd3; border-bottom-left-radius: 8px; box-shadow: 0 1px 1px #0b141a26; }
p { margin: 0; height: 19.5px; display: flex; align-items: center; white-space: pre; }
.incoming { width: 336px; margin: 12px 0 0 37px; display: flex; flex-direction: column; gap: 3px; }
.bubble { position: relative; box-sizing: border-box; background: #fff; border-radius: 0 8px 8px 8px; box-shadow: 0 1px 1px #0b141a2e; padding: 6.6px 9px; }
.greeting { height: 91px; }
.tail::before { content: ""; position: absolute; left: -7px; top: 0; width: 8px; height: 12px; background: #fff; clip-path: polygon(0 0, 100% 0, 100% 100%, 88% 80%, 6% 12%); border-radius: 2px 0 0 0; }
time { position: absolute; right: 7px; bottom: 3px; font-size: 10.2px; line-height: 15px; color: #767777; white-space: nowrap; }
button { border: 0; margin: 0; padding: 0 0 1px 2px; font: inherit; font-size: 13.2px; color: #1b8755; background: #fff; height: 34px; border-radius: 8px; box-shadow: 0 1px 1px #0b141a2e; }
button.used { color: #6b6f71; }
.emoji { display: block; flex: none; width: 19px; height: 19px; margin-right: 5px; }
.inline { margin: 0 4px; }
.outgoing { box-sizing: border-box; width: 500px; height: 110px; margin: 20px 0 0 788px; padding: 3px; background: #d9fdd3; border-radius: 8px; box-shadow: 0 1px 1px #0b141a2e; }
.quote { box-sizing: border-box; height: 74px; border-left: 4px solid #06cf9c; border-radius: 6px; background: #d4f2cd; padding: 6px 7.5px; color: #5c6b62; font-size: 12.5px; }
.quote strong { display: block; height: 20px; font-size: 12.2px; letter-spacing: -.12px; font-weight: 600; line-height: 20px; color: #14cd9d; }
.quote p { height: 21px; }
.answer { position: relative; padding: 7px 5.5px; font-size: 13.3px; }
.answer time { left: 330px; right: auto; top: 10px; bottom: auto; }
.last-row { display: flex; align-items: center; gap: 6px; margin: 12px 0 0 37px; }
.welcome { width: 260px; height: 228px; }
.react { display: grid; place-items: center; width: 26px; height: 26px; border-radius: 50%; padding: 0; }
b { margin-right: 4px; font-weight: 700; color: #000; }
</style>
